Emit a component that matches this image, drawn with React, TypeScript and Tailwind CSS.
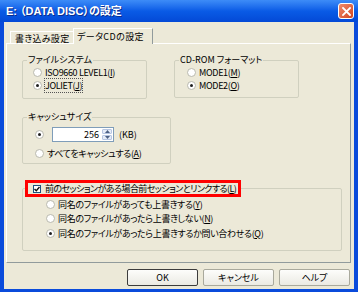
import React from "react";

const font = "font-['Noto_Sans_CJK_JP','Noto_Sans',sans-serif] [font-feature-settings:'palt']";

const Radio = ({ checked }: { checked?: boolean }) => (
  <span className="flex h-[9px] w-[9px] shrink-0 items-center justify-center rounded-full border border-[#b9b9ae] bg-white">
    {checked && <span className="h-[3px] w-[3px] rounded-full bg-[#202020]" />}
  </span>
);

const Option = ({
  label,
  checked,
  className = "",
}: {
  label: React.ReactNode;
  checked?: boolean;
  className?: string;
}) => (
  <div className={`flex h-[13px] items-center ${className}`}>
    <Radio checked={checked} />
    <span className="ml-[3px] leading-none tracking-[-0.35px]">{label}</span>
  </div>
);

const U = ({ children }: { children: React.ReactNode }) => <span className="underline">{children}</span>;

const Group = ({
  legend,
  className = "",
  children,
}: {
  legend: React.ReactNode;
  className?: string;
  children: React.ReactNode;
}) => (
  <fieldset className={`border border-[#d0d0bf] rounded-[2px] ${className}`}>
    <legend className="ml-[4px] px-[1px] leading-[12px]">{legend}</legend>
    {children}
  </fieldset>
);

const Button = ({ label, primary }: { label: string; primary?: boolean }) => (
  <button
    className={`h-[17px] w-[71px] rounded-[2px] bg-gradient-to-b from-[#fdfdfb] to-[#ebeae3] leading-none ${
      primary ? "border border-[#3c3c3c]" : "border border-[#a9a99c]"
    }`}
  >
    {label}
  </button>
);

export default function App() {
  return (
    <div className={`${font} flex h-[292px] w-[358px] flex-col bg-[#0a4bdb] text-[9px] text-black`}>
      {/* title bar */}
      <div className="flex h-[22px] shrink-0 items-center justify-between bg-gradient-to-b from-[#3d8cf7] via-[#0a5be6] to-[#0449d6] pl-[6px] pr-[4px]">
        <span className="font-['Liberation_Sans','Noto_Sans_CJK_JP',sans-serif] text-[11px] font-bold text-white [text-shadow:1px_1px_0_#0b2c8c]">
          E: （DATA DISC）の設定
        </span>
        <span className="flex h-[16px] w-[16px] items-center justify-center rounded-[3px] border border-white bg-gradient-to-br from-[#f08a6a] to-[#d2441e]">
          <svg width="9" height="9" viewBox="0 0 9 9">
            <path d="M1 1 L8 8 M8 1 L1 8" stroke="white" strokeWidth="1.8" strokeLinecap="square" />
          </svg>
        </span>
      </div>

      {/* body */}
      <div className="mx-[4px] mb-[3px] flex flex-1 flex-col bg-[#ece9d8]">
        {/* tabs */}
        <div className="relative z-10 -mb-[1px] mt-[6px] flex h-[16px] items-end pl-[6px]">
          <div className="flex h-[13px] w-[63px] items-center border-l border-t border-white pl-[4px] leading-none tracking-[0.3px]">
            書き込み設定
          </div>
          <div className="flex h-[16px] w-[80px] items-center border-r border-t border-l border-r-[#919b9c] border-l-white border-t-white bg-[#ece9d8] pb-[1px] pl-[3px] leading-none tracking-[0.4px]">
            データCDの設定
          </div>
        </div>

        {/* panel */}
        <div className="ml-[2px] flex h-[220px] w-[345px] flex-col border border-t-white border-l-white border-r-[#919b9c] border-b-[#919b9c] pl-[15px]">
          <div className="mt-[10px] flex gap-[27px]">
            <Group legend="ファイルシステム" className="h-[45px] w-[125px]">
              <div className="pl-[10px]">
                <Option label={<>ISO9660 LEVEL1(<U>I</U>)</>} />
                <Option checked label={<span className="outline-1 outline-dotted outline-[#555]">JOLIET(<U>J</U>)</span>} />
              </div>
            </Group>
            <Group legend="CD-ROM フォーマット" className="h-[44px] w-[125px]">
              <div className="pl-[12px]">
                <Option label={<>MODE1(<U>M</U>)</>} />
                <Option checked label={<>MODE2(<U>O</U>)</>} />
              </div>
            </Group>
          </div>

          <Group legend="キャッシュサイズ" className="mt-[12px] h-[53px] w-[149px]">
            <div className="pl-[12px]">
              <div className="mt-[4px] flex h-[15px] items-center">
                <Radio checked />
                <div className="ml-[8px] flex h-[15px] w-[62px] border border-[#7f9db9] bg-white">
                  <span className="flex-1 pr-[2px] text-right leading-[13px]">256</span>
                  <div className="flex w-[12px] flex-col gap-[1px] p-[1px]">
                    <span className="flex flex-1 items-center justify-center rounded-[1px] border border-[#b7c6e2] bg-[#e6ecf8]">
                      <svg width="5" height="3" viewBox="0 0 5 3"><path d="M0 3 L2.5 0 L5 3 Z" fill="#4d6185" /></svg>
                    </span>
                    <span className="flex flex-1 items-center justify-center rounded-[1px] border border-[#b7c6e2] bg-[#e6ecf8]">
                      <svg width="5" height="3" viewBox="0 0 5 3"><path d="M0 0 L2.5 3 L5 0 Z" fill="#4d6185" /></svg>
                    </span>
                  </div>
                </div>
                <span className="ml-[5px] leading-none">(KB)</span>
              </div>
              <Option className="mt-[5px]" label={<>すべてをキャッシュする(<U>A</U>)</>} />
            </div>
          </Group>

          <fieldset className="mt-[16px] h-[71px] w-[320px] rounded-[2px] border border-[#d0d0bf]">
            <legend className="ml-[2px] flex h-[17px] w-[216px] items-center border-[3px] border-[#ff0000] pl-[5px]">
              <span className="flex h-[8px] w-[8px] items-center justify-center border border-[#1c5180] bg-white">
                <svg width="6" height="6" viewBox="0 0 6 6">
                  <path d="M0.5 3 L2.3 4.8 L5.5 1" stroke="#111" strokeWidth="1.4" fill="none" />
                </svg>
              </span>
              <span className="ml-[4px] whitespace-nowrap leading-none tracking-[-0.55px]">
                前のセッションがある場合前セッションとリンクする(<U>L</U>)
              </span>
            </legend>
            <div className="pl-[23px]">
              <Option className="h-[14.5px]" label={<>同名のファイルがあっても上書きする(<U>Y</U>)</>} />
              <Option className="h-[14.5px]" label={<>同名のファイルがあったら上書きしない(<U>N</U>)</>} />
              <Option className="h-[14.5px]" checked label={<>同名のファイルがあったら上書きするか問い合わせる(<U>Q</U>)</>} />
            </div>
          </fieldset>
        </div>

        {/* buttons */}
        <div className="mt-[6px] flex justify-end gap-[5px] pr-[4px]">
          <Button label="OK" primary />
          <Button label="キャンセル" />
          <Button label="ヘルプ" />
        </div>
      </div>
    </div>
  );
}
